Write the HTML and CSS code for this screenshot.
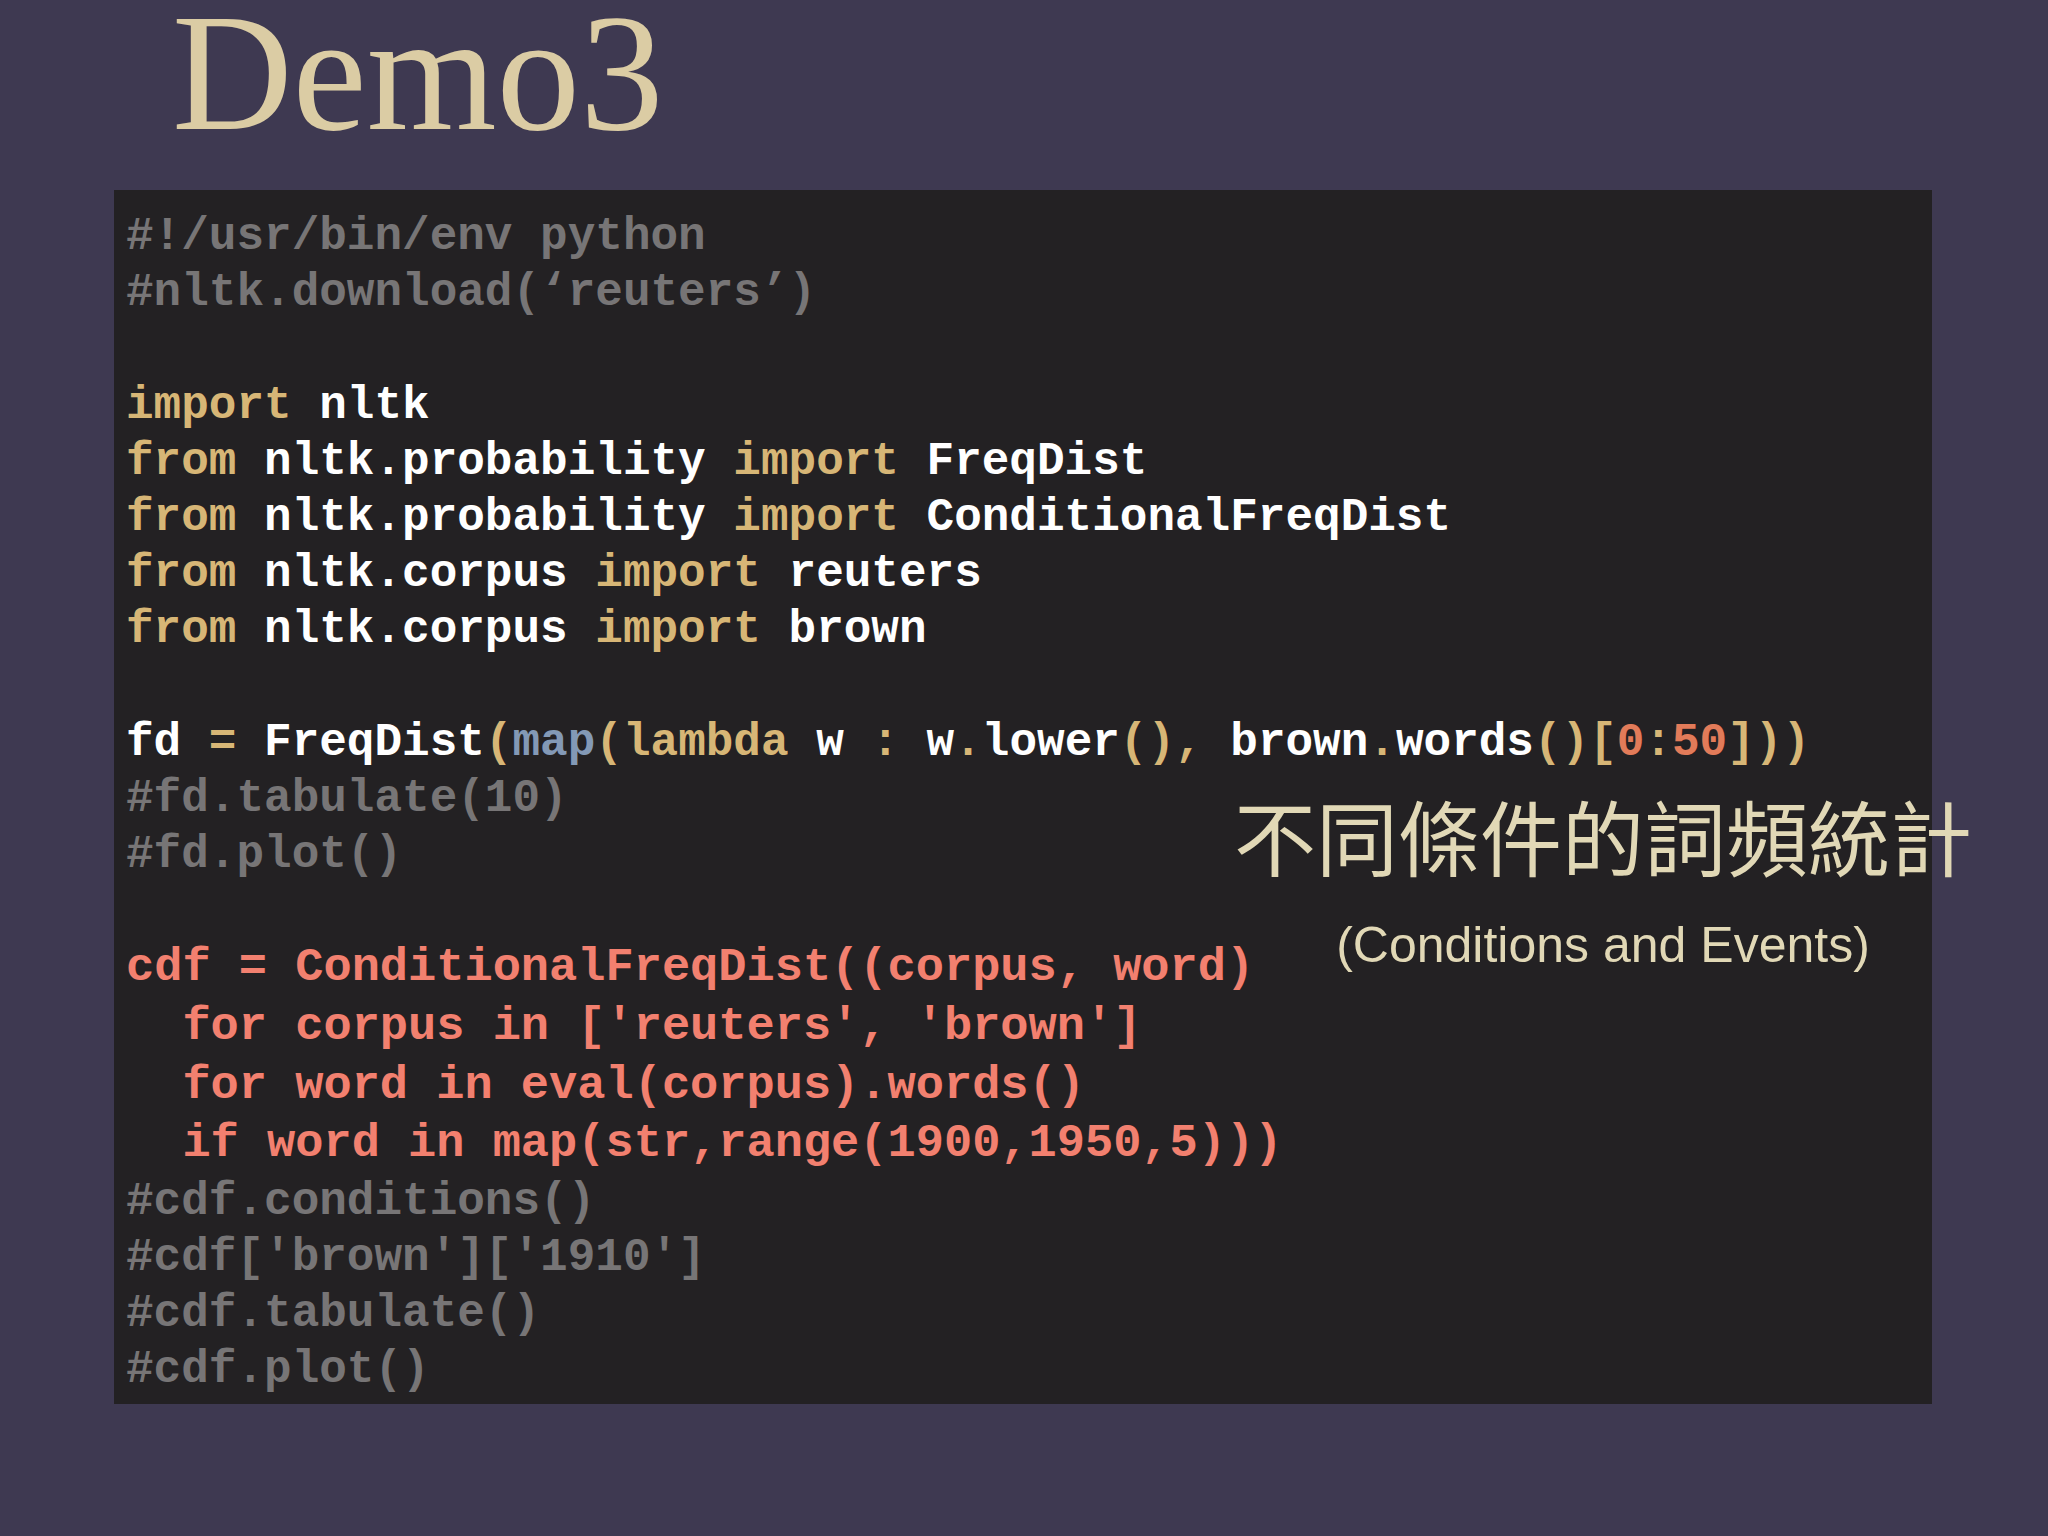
FILE: index.html
```html
<!DOCTYPE html>
<html lang="zh-Hant">
<head>
<meta charset="utf-8">
<title>Demo3</title>
<link rel="stylesheet" href="styles.css">
</head>
<body>
<div class="slide">
  <h1 class="title">Demo3</h1>
  <div class="codebox">
    <div class="code">
      <div class="ln cm">#!/usr/bin/env python</div>
      <div class="ln cm">#nltk.download(‘reuters’)</div>
      <div class="ln"> </div>
      <div class="ln"><span class="kw">import</span> nltk</div>
      <div class="ln"><span class="kw">from</span> nltk.probability <span class="kw">import</span> FreqDist</div>
      <div class="ln"><span class="kw">from</span> nltk.probability <span class="kw">import</span> ConditionalFreqDist</div>
      <div class="ln"><span class="kw">from</span> nltk.corpus <span class="kw">import</span> reuters</div>
      <div class="ln"><span class="kw">from</span> nltk.corpus <span class="kw">import</span> brown</div>
      <div class="ln"> </div>
      <div class="ln">fd <span class="kw">=</span> FreqDist<span class="kw">(</span><span class="fn">map</span><span class="kw">(lambda</span> w <span class="kw">:</span> w<span class="kw">.</span>lower<span class="kw">(),</span> brown<span class="kw">.</span>words<span class="kw">()[</span><span class="num">0</span><span class="kw">:</span><span class="num">50</span><span class="kw">]))</span></div>
      <div class="ln cm">#fd.tabulate(10)</div>
      <div class="ln cm">#fd.plot()</div>
      <div class="ln"> </div>
      <div class="ln hl">cdf = ConditionalFreqDist((corpus, word)</div>
      <div class="ln hl">  for corpus in ['reuters', 'brown']</div>
      <div class="ln hl">  for word in eval(corpus).words()</div>
      <div class="ln hl">  if word in map(str,range(1900,1950,5)))</div>
      <div class="ln cm">#cdf.conditions()</div>
      <div class="ln cm">#cdf['brown']['1910']</div>
      <div class="ln cm">#cdf.tabulate()</div>
      <div class="ln cm">#cdf.plot()</div>
    </div>
    <div class="note">
      <div class="note-zh">不同條件的詞頻統計</div>
      <div class="note-en">(Conditions and Events)</div>
    </div>
  </div>
</div>
</body>
</html>
```

FILE: styles.css
```css
html, body {
  margin: 0;
  padding: 0;
  background: #3e3951;
}

.slide {
  width: 2048px;
  height: 1536px;
  display: flex;
  flex-direction: column;
  background: #3e3951;
}

.title {
  margin: 0 0 45px 0;
  padding-left: 172px;
  height: 145px;
  font-family: "Liberation Serif", "Times New Roman", serif;
  font-weight: normal;
  font-size: 167px;
  line-height: 145px;
  color: #dbcca4;
}

.codebox {
  position: relative;
  margin-left: 114px;
  width: 1818px;
  height: 1214px;
  box-sizing: border-box;
  padding: 19px 0 0 12px;
  background: #232123;
}

.code {
  font-family: "Nimbus Mono PS", "Courier New", "Liberation Mono", monospace;
  font-weight: bold;
  font-size: 46px;
  color: #ffffff;
}

.ln {
  white-space: pre;
  height: 56.2px;
  line-height: 56.2px;
}

.kw { color: #d7b676; }
.fn { color: #8399b6; }
.num { color: #e27b59; }

.cm {
  color: #777576;
}

.hl {
  color: #f2806f;
  font-size: 47px;
  height: 58.6px;
  line-height: 58.6px;
}

.note {
  position: absolute;
  left: 1039px;
  top: 595px;
  width: 900px;
  display: flex;
  flex-direction: column;
  align-items: center;
  gap: 30px;
  color: #e1d8b6;
}

.note-zh {
  font-family: "Noto Sans CJK TC", "Noto Sans CJK SC", sans-serif;
  font-size: 82px;
  line-height: 100px;
  height: 100px;
  white-space: nowrap;
}

.note-en {
  font-family: "Liberation Sans", Arial, sans-serif;
  font-size: 50px;
  line-height: 60px;
  white-space: nowrap;
}
```
